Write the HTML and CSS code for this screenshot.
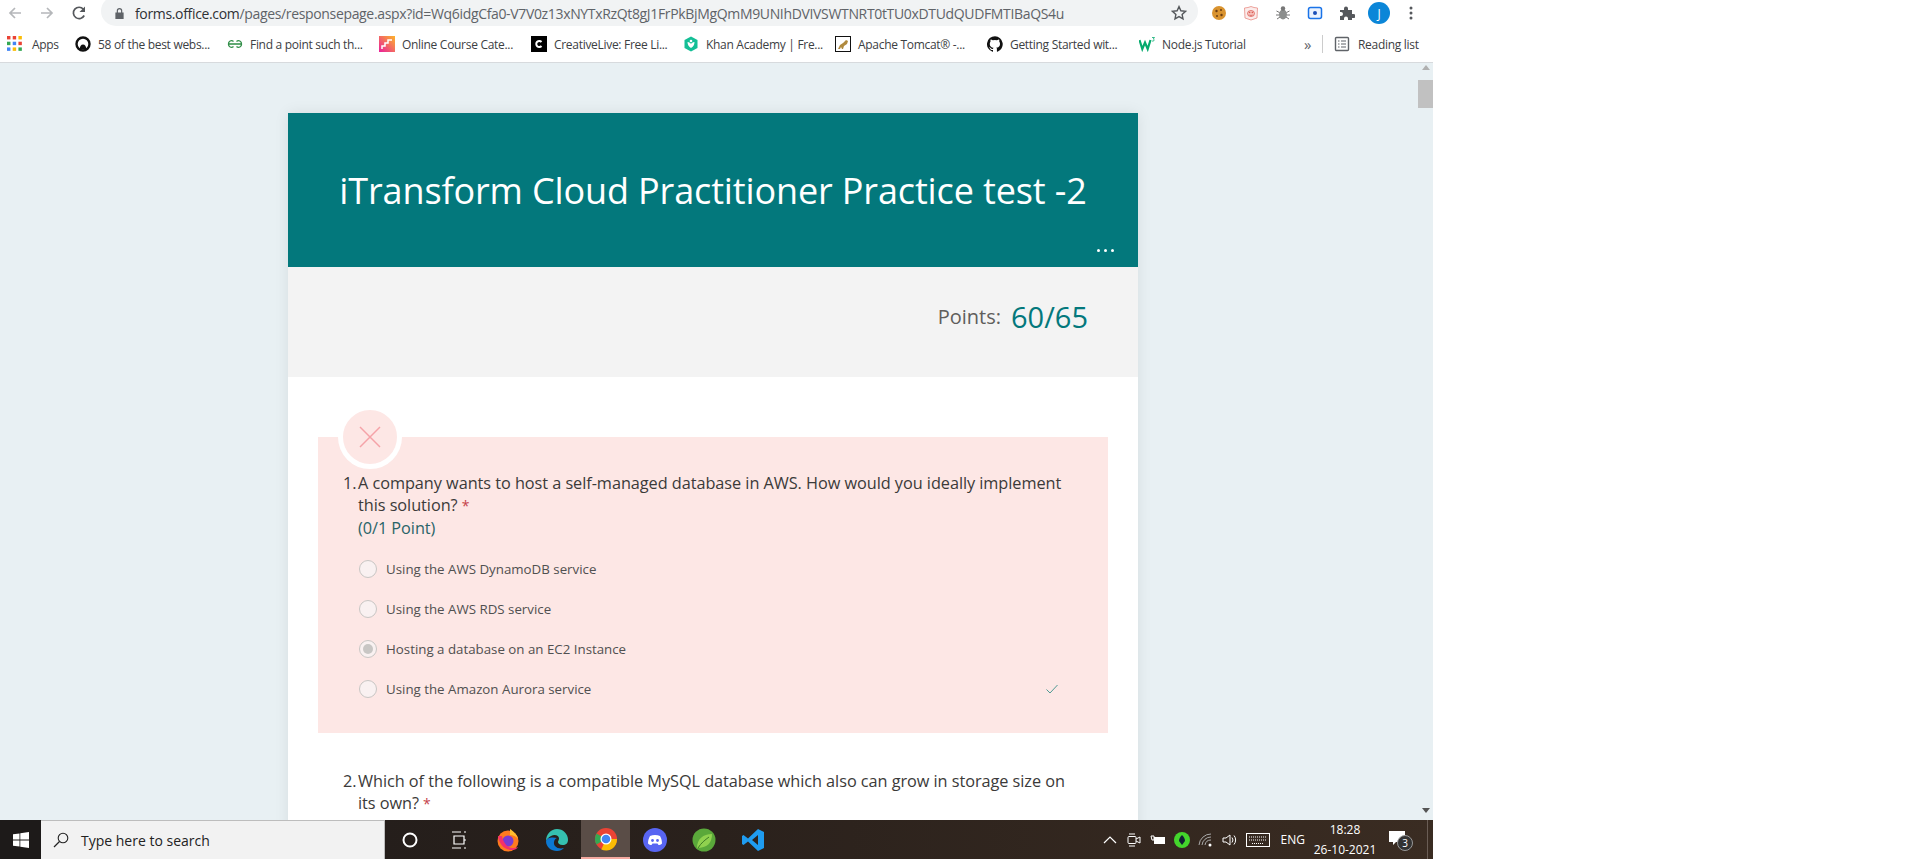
FILE: index.html
```html
<!DOCTYPE html>
<html lang="en">
<head>
<meta charset="utf-8">
<title>iTransform Cloud Practitioner Practice test -2</title>
<link rel="stylesheet" href="styles.css">
</head>
<body>
<div class="screen">
  <header class="toolbar">
    <div class="nav">
      <svg class="nav-icon" viewBox="0 0 16 16"><path d="M14 8H3M8 3L3 8l5 5" fill="none" stroke="#b5b7ba" stroke-width="1.7"/></svg>
      <svg class="nav-icon" viewBox="0 0 16 16"><path d="M2 8h11M8 3l5 5-5 5" fill="none" stroke="#b5b7ba" stroke-width="1.7"/></svg>
      <svg class="nav-icon" viewBox="0 0 16 16"><path d="M13.2 10.5A5.7 5.7 0 1 1 12.4 4.2" fill="none" stroke="#55585c" stroke-width="1.7"/><path d="M14 1.5V7H8.5z" fill="#55585c"/></svg>
    </div>
    <div class="omnibox">
      <svg class="lock" viewBox="0 0 12 14"><path d="M3 6V4a3 3 0 0 1 6 0v2h1.5v7h-9V6zm1.3 0h3.4V4a1.7 1.7 0 0 0-3.4 0z" fill="#5f6368"/></svg>
      <span class="url"><span class="host">forms.office.com</span>/pages/responsepage.aspx?id=Wq6idgCfa0-V7V0z13xNYTxRzQt8gJ1FrPkBjMgQmM9UNIhDVIVSWTNRT0tTU0xDTUdQUDFMTIBaQS4u</span>
      <svg class="star" viewBox="0 0 16 16"><path d="M8 1.6l1.9 4.2 4.6.5-3.4 3.1.9 4.5-4-2.3-4 2.3.9-4.5L1.5 6.300l4.600-.5z" fill="none" stroke="#55585c" stroke-width="1.400"/></svg>
    </div>
    <div class="extensions">
      <svg class="ext" viewBox="0 0 16 16"><circle cx="8" cy="8" r="7" fill="#d9932f"/><circle cx="5.500" cy="6" r="1.200" fill="#6b3d12"/><circle cx="10" cy="5" r="1" fill="#6b3d12"/><circle cx="10.500" cy="10" r="1.200" fill="#6b3d12"/><circle cx="6" cy="11" r="1" fill="#6b3d12"/></svg>
      <svg class="ext" viewBox="0 0 16 16"><path d="M1.500 3l3.500-.5 3-1 3 1 3.500.5-.5 10-6 2-6-2z" fill="#fbeceb" stroke="#e88d85" stroke-width=".8"/><ellipse cx="8" cy="8.500" rx="3.500" ry="3" fill="#f6c4bf" stroke="#d9534a" stroke-width=".7"/><circle cx="6.700" cy="7.500" r=".7" fill="#d9534a"/><circle cx="9.300" cy="7.500" r=".7" fill="#d9534a"/><path d="M6.500 10q1.500 1 3 0" fill="none" stroke="#d9534a" stroke-width=".7"/></svg>
      <svg class="ext" viewBox="0 0 16 16"><ellipse cx="8" cy="9.500" rx="4" ry="5" fill="#8b8d8c"/><circle cx="8" cy="3.500" r="2.200" fill="#777"/><path d="M1.500 6l3 1.500M14.500 6l-3 1.500M1 10h3M15 10h-3M2 14l3-2M14 14l-3-2" stroke="#777" fill="none"/></svg>
      <svg class="ext" viewBox="0 0 16 16"><rect x="1.500" y="2.500" width="13" height="11" rx="2" fill="#eaf2fe" stroke="#1a73e8" stroke-width="1.500"/><circle cx="8" cy="8" r="2" fill="#1a4fb8"/></svg>
      <svg class="ext" viewBox="0 0 16 16"><path d="M1 5h4V3.500a2 2 0 0 1 4 0V5h4v4h1.500a2 2 0 0 1 0 4H13v2H9v-1.500a2 2 0 0 0-4 0V15H1v-4h1a2 2 0 0 0 0-4H1z" fill="#55585c"/></svg>
      <span class="avatar">J</span>
      <svg class="ext" viewBox="0 0 16 16"><circle cx="8" cy="3" r="1.500" fill="#55585c"/><circle cx="8" cy="8" r="1.500" fill="#55585c"/><circle cx="8" cy="13" r="1.500" fill="#55585c"/></svg>
    </div>
  </header>

  <nav class="bookmarks">
    <a class="bm bm-apps">
      <svg class="fav" viewBox="0 0 14 14"><g><rect x="0" y="0" width="3" height="3" fill="#ea4335"/><rect x="5" y="0" width="3" height="3" fill="#ea4335"/><rect x="10" y="0" width="3" height="3" fill="#fbbc05"/><rect x="0" y="5" width="3" height="3" fill="#34a853"/><rect x="5" y="5" width="3" height="3" fill="#4285f4"/><rect x="10" y="5" width="3" height="3" fill="#ea4335"/><rect x="0" y="10" width="3" height="3" fill="#4285f4"/><rect x="5" y="10" width="3" height="3" fill="#fbbc05"/><rect x="10" y="10" width="3" height="3" fill="#34a853"/></g></svg>
      <span>Apps</span>
    </a>
    <a class="bm">
      <svg class="fav" viewBox="0 0 16 16"><circle cx="8" cy="8" r="6.500" fill="none" stroke="#111" stroke-width="2.400"/><path d="M4.500 13.500C5 10 6 8.500 8 8.500s3 1.500 3.500 5z" fill="#111"/></svg>
      <span>58 of the best webs...</span>
    </a>
    <a class="bm">
      <svg class="fav" viewBox="0 0 16 16"><path d="M8 8H1.500a3 3 0 0 1 5-2.500M8 8h6.500a3 3 0 0 0-5-2.500M1.500 8a3 3 0 0 0 5 2.500M14.500 8a3 3 0 0 1-5 2.500" fill="none" stroke="#2f8d46" stroke-width="1.300"/></svg>
      <span>Find a point such th...</span>
    </a>
    <a class="bm">
      <svg class="fav" viewBox="0 0 16 16"><defs><linearGradient id="g1" x1="0" y1="1" x2="1" y2="0"><stop offset="0" stop-color="#e91e9c"/><stop offset="1" stop-color="#fdb52a"/></linearGradient></defs><rect width="16" height="16" fill="url(#g1)"/><path d="M3 13V10h3V7h3V4h4" fill="none" stroke="#fff" stroke-width="1.500"/></svg>
      <span>Online Course Cate...</span>
    </a>
    <a class="bm">
      <svg class="fav" viewBox="0 0 16 16"><rect width="16" height="16" fill="#000"/><path d="M10.500 6a3 3 0 1 0 0 4" fill="none" stroke="#fff" stroke-width="2"/></svg>
      <span>CreativeLive: Free Li...</span>
    </a>
    <a class="bm">
      <svg class="fav" viewBox="0 0 16 16"><path d="M8 .5l6.500 3.500v8L8 15.500 1.500 12V4z" fill="#14bf96"/><path d="M4.500 6c2 0 3 1 3.500 2 .5-1 1.500-2 3.500-2 0 3-1.500 5-3.500 6-2-1-3.500-3-3.500-6z" fill="#fff"/><circle cx="8" cy="5" r="1.300" fill="#fff"/></svg>
      <span>Khan Academy | Fre...</span>
    </a>
    <a class="bm">
      <svg class="fav" viewBox="0 0 16 16"><rect x=".5" y=".5" width="15" height="15" fill="#fff" stroke="#111"/><path d="M3 13l2-4 3-2 3-3 2 1-1 3-3 2-1 3H7l-1-2-1 2z" fill="#b08a3e"/></svg>
      <span>Apache Tomcat® -...</span>
    </a>
    <a class="bm">
      <svg class="fav" viewBox="0 0 16 16"><path d="M8 .2a8 8 0 0 0-2.500 15.600c.4.100.5-.2.500-.4v-1.400c-2.200.5-2.700-1-2.700-1-.4-.9-.9-1.200-.9-1.200-.7-.5.100-.5.100-.5.800.100 1.200.8 1.200.8.700 1.200 1.900.9 2.300.7.100-.5.300-.9.500-1.100-1.800-.2-3.700-.9-3.700-4 0-.9.300-1.600.8-2.100-.1-.2-.4-1 .1-2.100 0 0 .7-.2 2.200.8a7.600 7.600 0 0 1 4 0c1.500-1 2.200-.8 2.200-.8.400 1.100.2 1.900.1 2.100.5.600.8 1.300.8 2.100 0 3.100-1.900 3.700-3.700 3.900.3.300.6.700.6 1.500v2.200c0 .2.100.5.600.4A8 8 0 0 0 8 .2z" fill="#111"/></svg>
      <span>Getting Started wit...</span>
    </a>
    <a class="bm bm-last">
      <svg class="fav" viewBox="0 0 16 16"><path d="M.5 4l2.800 9L6 6.500 8.700 13l2.800-9" fill="none" stroke="#04aa6d" stroke-width="2.200"/><path d="M13 1.500h2.500l-1.200 1.500a1.100 1.100 0 1 1-1.300 1.600" fill="none" stroke="#04aa6d" stroke-width=".8"/></svg>
      <span>Node.js Tutorial</span>
    </a>
    <span class="more">»</span>
    <span class="bm-sep"></span>
    <a class="bm-read">
      <svg class="fav" viewBox="0 0 16 16"><rect x="1.500" y="1.500" width="13" height="13" rx="1" fill="none" stroke="#5f6368" stroke-width="1.400"/><path d="M4 5h1.500M7 5h5M4 8h1.500M7 8h5M4 11h1.500M7 11h5" stroke="#5f6368" stroke-width="1.200"/></svg>
      <span>Reading list</span>
    </a>
  </nav>

  <main class="viewport">
    <div class="page">
      <section class="card">
        <header class="banner">
          <h1 class="title">iTransform Cloud Practitioner Practice test -2</h1>
          <span class="dots"><i></i><i></i><i></i></span>
        </header>
        <div class="score">
          <span class="score-label">Points:</span>
          <span class="score-value">60/65</span>
        </div>
        <div class="questions">
          <article class="question wrong">
            <span class="badge">
              <svg viewBox="0 0 24 24"><path d="M2 2l20 20M22 2L2 22" stroke="#f5a3a8" stroke-width="1.500" fill="none"/></svg>
            </span>
            <div class="q-title">
              <span class="q-num">1.</span>
              <div class="q-body">A company wants to host a self-managed database in AWS. How would you ideally implement this solution? <span class="req">*</span><br><span class="q-points">(0/1 Point)</span></div>
            </div>
            <ul class="options">
              <li class="option"><span class="radio"></span><span>Using the AWS DynamoDB service</span></li>
              <li class="option"><span class="radio"></span><span>Using the AWS RDS service</span></li>
              <li class="option"><span class="radio checked"></span><span>Hosting a database on an EC2 Instance</span></li>
              <li class="option"><span class="radio"></span><span>Using the Amazon Aurora service</span>
                <svg class="tick" viewBox="0 0 14 14"><path d="M1.500 7.500l3.500 3.500 7.500-8" fill="none" stroke="#4f9a94" stroke-width="1"/></svg>
              </li>
            </ul>
          </article>
          <article class="question plain">
            <div class="q-title">
              <span class="q-num">2.</span>
              <div class="q-body">Which of the following is a compatible MySQL database which also can grow in storage size on its own? <span class="req">*</span><br><span class="q-points">(1/1 Point)</span></div>
            </div>
          </article>
        </div>
      </section>
    </div>
    <div class="scrollbar">
      <span class="arrow up"></span>
      <span class="thumb"></span>
      <span class="track"></span>
      <span class="arrow down"></span>
    </div>
  </main>

  <footer class="taskbar">
    <span class="start">
      <svg viewBox="0 0 16 16" class="win"><path d="M0 2.300l6.500-.9v6.200H0zM7.300 1.300L16 0v7.600H7.300zM0 8.400h6.500v6.200L0 13.700zM7.300 8.400H16V16l-8.700-1.300z" fill="#fff"/></svg>
    </span>
    <span class="search">
      <svg class="search-icon" viewBox="0 0 16 16"><circle cx="10" cy="6" r="4.800" fill="none" stroke="#222" stroke-width="1.100"/><path d="M6.500 9.500L1 15" stroke="#222" stroke-width="1.200"/></svg>
      <span>Type here to search</span>
    </span>
    <span class="tb-slot"><svg class="tb-icon" viewBox="0 0 20 20"><circle cx="10" cy="10" r="6.500" fill="none" stroke="#fff" stroke-width="2"/></svg></span>
    <span class="tb-slot"><svg class="tb-icon" viewBox="0 0 20 20"><path d="M3 2h9M15 2h2M5 6h10v8H5zM3 18h9M15 18h2M15 10h2" fill="none" stroke="#fff" stroke-width="1.200"/></svg></span>
    <span class="tb-slot"><svg class="tb-app" viewBox="0 0 24 24"><circle cx="12" cy="13" r="10.500" fill="#ff7a1f"/><path d="M14 1c3 2 7 5 8 10-2-3-5-4-8-4z" fill="#ffbd2e"/><circle cx="12" cy="13" r="5.500" fill="#7a3bd1"/><path d="M2 8c1 8 6 14 14 14 3 0 5-1 6-3-6 3-14 0-16-11z" fill="#f5306a"/></svg></span>
    <span class="tb-slot"><svg class="tb-app" viewBox="0 0 24 24"><path d="M12 1a11 11 0 0 1 11 11c0 3-2 5-5.500 5-3 0-4.500-1.500-4.500-3 0-1 1-2 1-3.500C14 7.500 10 6 6 8 3 9.500 1.500 12 1 13 1 6 6 1 12 1z" fill="#35c1b0"/><path d="M1 13c0 6 5 10 11 10 3 0 5-1 7-3-3 1-7 .5-9-2s-1-7 2-8C8 9 2 9 1 13z" fill="#0c78d1"/></svg></span>
    <span class="tb-slot active"><svg class="tb-app" viewBox="0 0 24 24"><circle cx="12" cy="12" r="11" fill="#ea4335"/><path d="M12 12L2.500 17.500A11 11 0 0 1 2.500 6.500z" fill="#34a853"/><path d="M12 12l-4.700 10.500A11 11 0 0 0 23 12z" fill="#fbbc05"/><circle cx="12" cy="12" r="5.500" fill="#fff"/><circle cx="12" cy="12" r="4.300" fill="#4285f4"/></svg></span>
    <span class="tb-slot"><svg class="tb-app" viewBox="0 0 24 24"><circle cx="12" cy="12" r="12" fill="#5865f2"/><path d="M7 8c3-1.500 7-1.500 10 0 1.500 2.500 2 5 2 7.500-1 1-2.500 1.500-3.500 1.500l-1-1.500h-5l-1 1.500c-1 0-2.500-.5-3.500-1.500C5 13 5.500 10.500 7 8z" fill="#fff"/><circle cx="9.500" cy="12.500" r="1.400" fill="#5865f2"/><circle cx="14.500" cy="12.500" r="1.400" fill="#5865f2"/></svg></span>
    <span class="tb-slot"><svg class="tb-app" viewBox="0 0 24 24"><circle cx="12" cy="12" r="11.500" fill="#5aa83a"/><path d="M5 20C5 11 11 6 20 6c0 9-5 14-15 14z" fill="#8fd14f"/><path d="M6 20c3-5 7-8 11-11" stroke="#3d7a26" fill="none"/></svg></span>
    <span class="tb-slot"><svg class="tb-app" viewBox="0 0 24 24"><path d="M17 1l6 3v16l-6 3L7 13.500 2.500 17 1 16V8l1.500-1L7 10.500zM17 7l-6 5 6 5z" fill="#1f9cf0"/></svg></span>
    <span class="tray">
      <svg class="tray-icon" viewBox="0 0 16 16"><path d="M2 11l6-6 6 6" fill="none" stroke="#fff" stroke-width="1.200"/></svg>
      <svg class="tray-icon" viewBox="0 0 16 16"><rect x="2" y="4.500" width="8" height="7" rx="1" fill="none" stroke="#fff"/><path d="M10 7l4-2v6l-4-2M3 2h6M3 14h6" fill="none" stroke="#fff"/></svg>
      <svg class="tray-icon" viewBox="0 0 16 16"><rect x="4" y="5" width="11" height="7" fill="#fff"/><path d="M1 4h3v4H2z" fill="none" stroke="#fff"/></svg>
      <svg class="tray-icon" viewBox="0 0 16 16"><circle cx="8" cy="8" r="8" fill="#44d62c"/><path d="M8 3c-2 2-3 4-3 6l3 4 3-4c0-2-1-4-3-6z" fill="#123"/></svg>
      <svg class="tray-icon" viewBox="0 0 16 16"><path d="M1 13a12 12 0 0 1 12-11M4 13a9 9 0 0 1 9-8M7 13a6 6 0 0 1 6-5" fill="none" stroke="#aaa"/><circle cx="12" cy="13" r="1.500" fill="#fff"/></svg>
      <svg class="tray-icon" viewBox="0 0 16 16"><path d="M1 6h3l4-3v10l-4-3H1z" fill="none" stroke="#fff"/><path d="M10 5.500a4 4 0 0 1 0 5M12 3.500a7 7 0 0 1 0 9" fill="none" stroke="#fff"/></svg>
      <svg class="tray-kb" viewBox="0 0 24 14"><rect x=".5" y=".5" width="23" height="13" fill="none" stroke="#fff"/><path d="M3 4h18M3 7h18M6 10.500h12" stroke="#fff" stroke-dasharray="1 1"/></svg>
      <span class="lang">ENG</span>
      <span class="clock"><span>18:28</span><span>26-10-2021</span></span>
      <span class="notify">
        <svg viewBox="0 0 16 16"><path d="M0 1h16v11H7l-3 3v-3H0z" fill="#fff"/></svg>
        <span class="notify-count">3</span>
      </span>
      <span class="tb-edge"></span>
    </span>
  </footer>
</div>
</body>
</html>
```
FILE: styles.css
```css
* { box-sizing: border-box; }
html, body { margin: 0; height: 100%; background: #fff; overflow: hidden; }
body { font-family: "Open Sans", "Liberation Sans", sans-serif; }
.screen { width: 1433px; height: 859px; display: flex; flex-direction: column; background: #fff; }

/* browser toolbar */
.toolbar { height: 26px; display: flex; align-items: flex-end; flex: none; }
.nav { display: flex; align-items: center; align-self: center; width: 101px; padding-left: 7px; gap: 16px; }
.nav-icon { width: 16px; height: 16px; flex: none; }
.omnibox { width: 1097px; height: 30px; flex: none; background: #f1f3f4; border-radius: 15px; display: flex; align-items: center; padding: 4px 11px 0 13px; }
.lock { width: 11px; height: 13px; flex: none; margin-right: 10px; }
.url { flex: 1; font-size: 14px; color: #5f6368; letter-spacing: -0.34px; white-space: nowrap; overflow: hidden; }
.host { color: #2f3134; }
.star { width: 16px; height: 16px; flex: none; }
.extensions { display: flex; align-items: center; align-self: center; gap: 16px; padding-left: 13px; }
.ext { width: 16px; height: 16px; flex: none; }
.avatar { width: 22px; height: 22px; border-radius: 50%; background: #0b86d8; color: #fff; font-size: 12px; display: flex; align-items: center; justify-content: center; margin: 0 -3px; }

/* bookmarks */
.bookmarks { height: 37px; flex: none; display: flex; align-items: center; border-bottom: 1px solid #d7dadd; padding-left: 7px; font-size: 12px; color: #3c4043; }
.bm { display: flex; align-items: center; gap: 7px; width: 152px; flex: none; white-space: nowrap; letter-spacing: -0.3px; }
.bm-apps { width: 68px; gap: 9px; }
.bm-last { width: 165px; }
.fav { width: 16px; height: 16px; flex: none; }
.more { width: 15px; color: #5f6368; font-size: 15px; }
.bm-sep { width: 1px; height: 18px; background: #ccc; margin: 0 11px 0 3px; }
.bm-read { display: flex; align-items: center; gap: 8px; white-space: nowrap; letter-spacing: -0.3px; }

/* page */
.viewport { flex: 1; min-height: 0; display: flex; background: #e8f0f3; overflow: hidden; }
.page { flex: 1; padding: 50px 0 0 288px; min-width: 0; }
.card { width: 850px; background: #fff; box-shadow: 0 0 14px rgba(0, 0, 0, .08); }
.banner { height: 154px; background: #03787c; position: relative; display: flex; align-items: center; justify-content: center; }
.title { margin: 0; color: #fff; font-size: 36px; font-weight: 400; letter-spacing: -0.13px; white-space: nowrap; }
.dots { position: absolute; right: 24px; bottom: 15px; display: flex; gap: 4px; }
.dots i { width: 3px; height: 3px; background: #fff; border-radius: 50%; }
.score { height: 110px; background: #f3f3f3; display: flex; align-items: center; justify-content: flex-end; gap: 10px; padding: 0 50px 12px 0; }
.score-label { font-size: 20px; color: #605e5c; }
.score-value { font-size: 29px; color: #03787c; }
.questions { padding: 60px 30px 0; }
.question { position: relative; }
.wrong { background: #fde7e5; height: 296px; padding: 35px 30px 0 25px; }
.plain { padding: 37px 30px 0 25px; }
.badge { position: absolute; left: 20px; top: -32px; width: 64px; height: 64px; border-radius: 50%; background: #fde7e5; border: 5px solid #fff; display: flex; align-items: center; justify-content: center; }
.badge svg { width: 24px; height: 24px; }
.q-title { display: flex; font-size: 16.300px; line-height: 22px; color: #3b3a39; letter-spacing: -0.05px; }
.q-num { width: 15px; flex: none; }
.q-body { flex: 1; }
.req { color: #c4414a; font-size: 14px; }
.q-points { color: #2a6468; }
.options { list-style: none; margin: 10px 0 0; padding: 0 0 0 16px; }
.option { height: 40px; display: flex; align-items: center; gap: 9px; font-size: 13.300px; color: #505050; position: relative; }
.radio { width: 18px; height: 18px; border: 1px solid #c8c6c4; border-radius: 50%; background: #f9f1f1; flex: none; display: flex; align-items: center; justify-content: center; }
.radio.checked::after { content: ""; width: 10px; height: 10px; border-radius: 50%; background: #c8c6c4; }
.tick { position: absolute; right: 19px; top: 13px; width: 14px; height: 14px; }

/* scrollbar */
.scrollbar { width: 15px; flex: none; display: flex; flex-direction: column; }
.arrow { height: 17px; flex: none; position: relative; }
.arrow::after { content: ""; position: absolute; left: 4px; border: 4px solid transparent; }
.up::after { top: 2px; border-bottom: 5px solid #b0b0b0; border-top: 0; }
.down::after { top: 5px; border-top: 5px solid #555; border-bottom: 0; }
.thumb { height: 28px; background: #c1c1c1; flex: none; }
.track { flex: 1; }

/* taskbar */
.taskbar { height: 39px; flex: none; display: flex; align-items: center; background: linear-gradient(90deg, #1f1b1a, #2a211c 50%, #3a2c22); color: #fff; }
.start { width: 41px; height: 100%; display: flex; align-items: center; justify-content: center; background: #1d1a19; }
.win { width: 16px; height: 16px; }
.search { width: 344px; height: 100%; background: #f2f2f2; border-top: 1px solid #bdbdbd; border-right: 1px solid #bdbdbd; display: flex; align-items: center; gap: 12px; padding-left: 12px; color: #222; font-size: 14px; }
.search-icon { width: 16px; height: 16px; flex: none; }
.tb-slot { width: 49px; height: 100%; display: flex; align-items: center; justify-content: center; flex: none; }
.active { background: #5a4d47; border-bottom: 2px solid #f4a9a0; }
.tb-icon { width: 20px; height: 20px; }
.tb-app { width: 24px; height: 24px; }
.tray { flex: 1; height: 100%; display: flex; align-items: center; justify-content: flex-end; padding-right: 5px; }
.tray-icon { width: 16px; height: 16px; flex: none; margin-right: 8px; }
.tray-kb { width: 24px; height: 14px; }
.lang { font-size: 12px; width: 35px; text-align: right; }
.clock { display: flex; flex-direction: column; align-items: center; font-size: 12px; line-height: 20px; margin-left: 6px; width: 68px; }
.notify { position: relative; width: 30px; height: 22px; margin-left: 3px; margin-right: 15px; }
.notify svg { width: 16px; height: 16px; position: absolute; left: 7px; top: 1px; }
.notify-count { position: absolute; left: 15px; top: 6px; width: 16px; height: 16px; background: #333; border: 1px solid #999; border-radius: 50%; font-size: 10px; line-height: 14px; text-align: center; }
.tb-edge { width: 1px; height: 100%; background: #6a5d55; }
```
